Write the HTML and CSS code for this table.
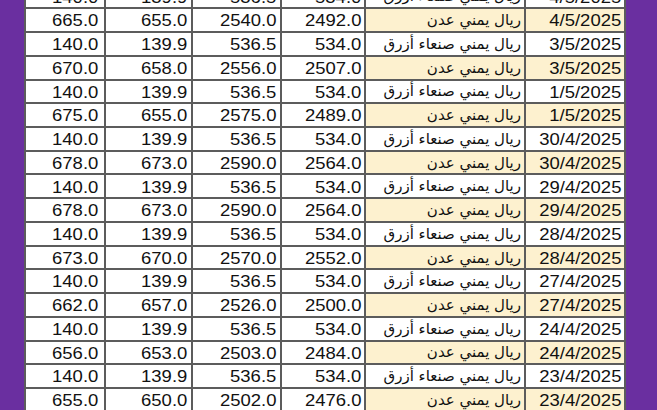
FILE: index.html
```html
<!DOCTYPE html>
<html lang="ar">
<head>
<meta charset="utf-8">
<title>أسعار الصرف</title>
<link rel="stylesheet" href="styles.css">
</head>
<body>
<div class="sheet">
  <div class="c n"><span>140.0</span></div><div class="c n"><span>139.9</span></div><div class="c n"><span>536.5</span></div><div class="c n"><span>534.0</span></div><div class="c ar">ريال يمني صنعاء أزرق</div><div class="c d"><span>4/5/2025</span></div>
  <div class="c n"><span>665.0</span></div><div class="c n"><span>655.0</span></div><div class="c n"><span>2540.0</span></div><div class="c n"><span>2492.0</span></div><div class="c ar y">ريال يمني عدن</div><div class="c d y"><span>4/5/2025</span></div>
  <div class="c n"><span>140.0</span></div><div class="c n"><span>139.9</span></div><div class="c n"><span>536.5</span></div><div class="c n"><span>534.0</span></div><div class="c ar">ريال يمني صنعاء أزرق</div><div class="c d"><span>3/5/2025</span></div>
  <div class="c n"><span>670.0</span></div><div class="c n"><span>658.0</span></div><div class="c n"><span>2556.0</span></div><div class="c n"><span>2507.0</span></div><div class="c ar y">ريال يمني عدن</div><div class="c d y"><span>3/5/2025</span></div>
  <div class="c n"><span>140.0</span></div><div class="c n"><span>139.9</span></div><div class="c n"><span>536.5</span></div><div class="c n"><span>534.0</span></div><div class="c ar">ريال يمني صنعاء أزرق</div><div class="c d"><span>1/5/2025</span></div>
  <div class="c n"><span>675.0</span></div><div class="c n"><span>655.0</span></div><div class="c n"><span>2575.0</span></div><div class="c n"><span>2489.0</span></div><div class="c ar y">ريال يمني عدن</div><div class="c d y"><span>1/5/2025</span></div>
  <div class="c n"><span>140.0</span></div><div class="c n"><span>139.9</span></div><div class="c n"><span>536.5</span></div><div class="c n"><span>534.0</span></div><div class="c ar">ريال يمني صنعاء أزرق</div><div class="c d"><span>30/4/2025</span></div>
  <div class="c n"><span>678.0</span></div><div class="c n"><span>673.0</span></div><div class="c n"><span>2590.0</span></div><div class="c n"><span>2564.0</span></div><div class="c ar y">ريال يمني عدن</div><div class="c d y"><span>30/4/2025</span></div>
  <div class="c n"><span>140.0</span></div><div class="c n"><span>139.9</span></div><div class="c n"><span>536.5</span></div><div class="c n"><span>534.0</span></div><div class="c ar">ريال يمني صنعاء أزرق</div><div class="c d"><span>29/4/2025</span></div>
  <div class="c n"><span>678.0</span></div><div class="c n"><span>673.0</span></div><div class="c n"><span>2590.0</span></div><div class="c n"><span>2564.0</span></div><div class="c ar y">ريال يمني عدن</div><div class="c d y"><span>29/4/2025</span></div>
  <div class="c n"><span>140.0</span></div><div class="c n"><span>139.9</span></div><div class="c n"><span>536.5</span></div><div class="c n"><span>534.0</span></div><div class="c ar">ريال يمني صنعاء أزرق</div><div class="c d"><span>28/4/2025</span></div>
  <div class="c n"><span>673.0</span></div><div class="c n"><span>670.0</span></div><div class="c n"><span>2570.0</span></div><div class="c n"><span>2552.0</span></div><div class="c ar y">ريال يمني عدن</div><div class="c d y"><span>28/4/2025</span></div>
  <div class="c n"><span>140.0</span></div><div class="c n"><span>139.9</span></div><div class="c n"><span>536.5</span></div><div class="c n"><span>534.0</span></div><div class="c ar">ريال يمني صنعاء أزرق</div><div class="c d"><span>27/4/2025</span></div>
  <div class="c n"><span>662.0</span></div><div class="c n"><span>657.0</span></div><div class="c n"><span>2526.0</span></div><div class="c n"><span>2500.0</span></div><div class="c ar y">ريال يمني عدن</div><div class="c d y"><span>27/4/2025</span></div>
  <div class="c n"><span>140.0</span></div><div class="c n"><span>139.9</span></div><div class="c n"><span>536.5</span></div><div class="c n"><span>534.0</span></div><div class="c ar">ريال يمني صنعاء أزرق</div><div class="c d"><span>24/4/2025</span></div>
  <div class="c n"><span>656.0</span></div><div class="c n"><span>653.0</span></div><div class="c n"><span>2503.0</span></div><div class="c n"><span>2484.0</span></div><div class="c ar y">ريال يمني عدن</div><div class="c d y"><span>24/4/2025</span></div>
  <div class="c n"><span>140.0</span></div><div class="c n"><span>139.9</span></div><div class="c n"><span>536.5</span></div><div class="c n"><span>534.0</span></div><div class="c ar">ريال يمني صنعاء أزرق</div><div class="c d"><span>23/4/2025</span></div>
  <div class="c n"><span>655.0</span></div><div class="c n"><span>650.0</span></div><div class="c n"><span>2502.0</span></div><div class="c n"><span>2476.0</span></div><div class="c ar y">ريال يمني عدن</div><div class="c d y"><span>23/4/2025</span></div>
</div>
</body>
</html>
```

FILE: styles.css
```css
html, body {
  margin: 0;
  padding: 0;
  height: 100%;
  overflow: hidden;
  background: #6a2fa0;
}

.sheet {
  display: grid;
  grid-template-columns: 78px 85px 87px 82px 158px 98px;
  grid-auto-rows: 21.74px;
  gap: 2px;
  padding: 0 2px 2px;
  width: 598px;
  margin: -14.44px 0 0 24px;
  background: #5c5c5c;
  font-family: "Liberation Sans", Arial, sans-serif;
  font-size: 16.5px;
  color: #111;
}

.c {
  background: #ffffff;
  display: flex;
  align-items: center;
  justify-content: flex-end;
  padding: 1px 4px 0 0;
  line-height: 1;
  white-space: nowrap;
  overflow: hidden;
}

.c span {
  display: inline-block;
  transform: scaleX(1.12);
  transform-origin: right center;
}

.n:nth-child(6n+1) {
  padding-right: 6px;
}

.n:nth-child(6n+4) {
  padding-right: 3px;
}

.ar {
  direction: rtl;
  justify-content: flex-start;
  padding-right: 3px;
  font-family: "DejaVu Sans", "Liberation Sans", sans-serif;
  font-size: 15px;
}

.d {
  padding-right: 3px;
}

.y {
  background: #fdf1cf;
}
```
